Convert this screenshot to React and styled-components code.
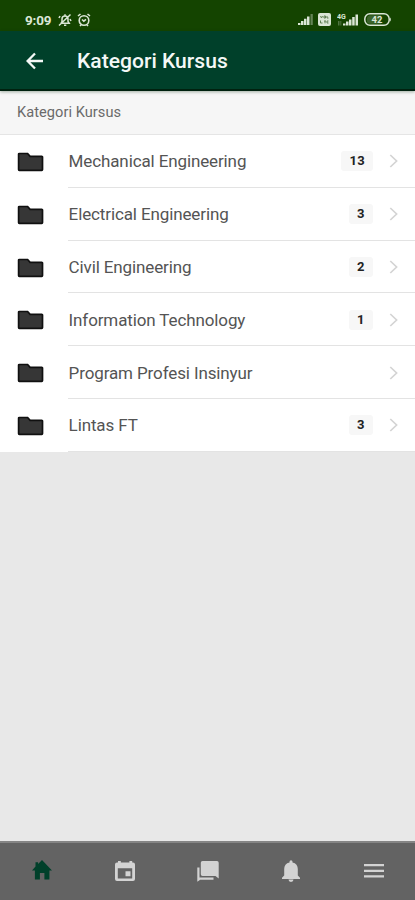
import React from 'react';
import styled, { createGlobalStyle } from 'styled-components';

const GlobalStyle = createGlobalStyle`
  * {
    box-sizing: border-box;
  }

  body {
    margin: 0;
    font-family: Roboto, 'Liberation Sans', sans-serif;
  }

  svg {
    display: block;
    flex-shrink: 0;
  }
`;

const Screen = styled.div`
  width: 100%;
  height: 900px;
  display: flex;
  flex-direction: column;
  overflow: hidden;
  background-color: #e8e8e8;
`;

const StatusBar = styled.div`
  height: 31px;
  flex-shrink: 0;
  display: flex;
  justify-content: space-between;
  padding: 8px 23px 0 25px;
  background-color: #144400;
  color: #dbe6d6;
`;

const StatusGroup = styled.div`
  display: flex;
  align-items: center;
  height: 23px;
  gap: ${props => props.$gap};
`;

const Clock = styled.span`
  width: 27px;
  font-size: 13.5px;
  font-weight: 700;
  letter-spacing: -0.2px;
  margin-right: 1px;
`;

const Header = styled.header`
  height: 60px;
  flex-shrink: 0;
  display: flex;
  align-items: center;
  gap: 33px;
  padding: 1px 0 0 26px;
  background-color: #00402a;
  border-bottom: 2px solid #00210f;
  box-shadow: 0 1px 3px rgba(0, 40, 10, 0.35);
  position: relative;
  color: #f4f8f6;
`;

const Title = styled.h1`
  margin: 0;
  font-size: 21.1px;
  font-weight: 500;
`;

const SectionLabel = styled.div`
  height: 44px;
  flex-shrink: 0;
  padding-left: 17px;
  line-height: 42px;
  font-size: 14.6px;
  letter-spacing: 0.05px;
  color: #6a6a6a;
  background-color: #f6f6f6;
  border-bottom: 1px solid #e5e5e5;
`;

const List = styled.ul`
  margin: 0;
  padding: 0;
  list-style: none;
  flex: 1;
`;

const Row = styled.li`
  height: 52.8px;
  display: flex;
  padding-left: 17px;
  background-color: #fff;
`;

const IconSlot = styled.div`
  width: 51px;
  padding-top: 17px;
`;

const RowBody = styled.div`
  flex: 1;
  display: flex;
  align-items: center;
  padding: 1px 16px 0 0.6px;
  border-bottom: 1.5px solid #e3e3e3;
`;

const Name = styled.span`
  flex: 1;
  font-size: 17px;
  letter-spacing: -0.12px;
  color: #545454;
`;

const Badge = styled.span`
  min-width: 24px;
  height: 20px;
  padding: 0 8px;
  border-radius: 3px;
  background-color: #f7f7f7;
  color: #222;
  font-size: 13px;
  font-weight: 700;
  line-height: 20px;
  text-align: center;
  letter-spacing: 0.3px;
  margin-right: 16px;
`;

const TabBar = styled.nav`
  height: 59px;
  flex-shrink: 0;
  display: grid;
  grid-template-columns: repeat(5, 1fr);
  justify-items: center;
  align-items: center;
  background-color: #636363;
  border-top: 2px solid #858585;
`;

const Tab = styled.div`
  color: ${props => (props.$active ? '#00402a' : '#d3d3d3')};
  padding-bottom: ${props => (props.$active ? '4px' : '1px')};
`;

const categories = [
  { name: 'Mechanical Engineering', count: 13 },
  { name: 'Electrical Engineering', count: 3 },
  { name: 'Civil Engineering', count: 2 },
  { name: 'Information Technology', count: 1 },
  { name: 'Program Profesi Insinyur' },
  { name: 'Lintas FT', count: 3 },
];

const MutedBell = () => (
  <svg width="14" height="14" viewBox="0 0 14 14" fill="none" stroke="currentColor" strokeWidth="1.5">
    <path d="M3 10.3h8.2L10 8.500V6a3 3 0 0 0-6 0v2.500L3 10.300M6 12.200h2.300M7 1.200v1.500M1 12.500 12.500 1.500" />
    <path d="M1 5l1-2M13 8l-1-2" />
  </svg>
);

const AlarmClock = () => (
  <svg width="14" height="14" viewBox="0 0 14 14" fill="none" stroke="currentColor" strokeWidth="1.6">
    <circle cx="7" cy="7.5" r="4.8" />
    <path d="M1 3l2.500-2M13 3l-2.500-2M5 6.500l1.800 1.600L9 6.400M3 13l1-1M11 13l-1-1" />
  </svg>
);

const Signal = () => (
  <svg width="15" height="11" viewBox="0 0 15 11" fill="currentColor">
    <path d="M0 9h2.500v2H0zM3 7h2.500v4H3zM6 4.800h2.500V11H6zM9 2.500h2.500V11H9z" />
    <path d="M12.500 0h2.300v11h-2.300z" opacity="0.4" />
  </svg>
);

const VolteBadge = () => (
  <svg width="13" height="13" viewBox="0 0 13 13">
    <rect width="13" height="13" rx="2" fill="currentColor" />
    <path d="M2.500 3l1 2 1-2M6 3h1.500v2H6zM9 3v2h1.500M2.500 7.500v2.500h2M6 8h2M7 8v2.300M10.500 8H9v2h1.500" stroke="#5f7f52" fill="none" />
  </svg>
);

const Signal4G = () => (
  <svg width="22" height="14" viewBox="0 0 22 14" fill="currentColor">
    <text x="0" y="5.7" fontSize="7" fontWeight="700">4G</text>
    <path d="M6 10.500h2.500v2H6zM9 8.500h2.500v4H9zM12 6.500h2.500v6H12zM15.200 4h2.500v8.500h-2.500zM18.500 1.500h2.500v11h-2.500z" />
    <path d="M1 8h1.500v4.500H1zM3.300 8h1v4.500h-1z" opacity="0.3" />
  </svg>
);

const Battery = () => (
  <svg width="28" height="13" viewBox="0 0 28 13">
    <rect x="0.8" y="0.8" width="24.4" height="11.4" rx="5.2" fill="none" stroke="currentColor" strokeWidth="1.5" />
    <path d="M6 2.300h11v8.400H6a3 3 0 0 1-3-4.200 4 4 0 0 1 3-4.200z" fill="currentColor" opacity="0.2" />
    <path d="M26.200 4.500c1.100.5 1.100 3.500 0 4z" fill="currentColor" />
    <text x="13" y="10" fontSize="9.5" fontWeight="700" textAnchor="middle" fill="currentColor">42</text>
  </svg>
);

const BackArrow = () => (
  <svg width="18" height="18" viewBox="0 0 18 18" fill="none" stroke="currentColor" strokeWidth="2.3">
    <path d="M17 9H2M9 1.500 1.600 9 9 16.500" />
  </svg>
);

const Folder = () => (
  <svg width="27" height="20" viewBox="0 0 27 20">
    <path
      d="M2.300 1.500h8.300l2.500 2.800h11.700a.7.7 0 0 1 .7.7v12.600a.7.7 0 0 1-.7.7H2.300a.7.7 0 0 1-.7-.7V2.200a.7.7 0 0 1 .7-.7z"
      fill="#363636"
      stroke="#101010"
      strokeWidth="1.7"
    />
  </svg>
);

const Chevron = () => (
  <svg width="10" height="14" viewBox="0 0 10 14" fill="none" stroke="#d4d4d4" strokeWidth="1.7">
    <path d="M1.300 1l6.300 6-6.300 6" />
  </svg>
);

const HomeIcon = () => (
  <svg width="20" height="20" viewBox="0 0 20 20" fill="currentColor">
    <path d="M10 0 20 10.500h-2.600v9h-5v-6.500H7.900v6.500h-5v-9H0l3.500-3.900V2.300h2.600v1.600z" />
  </svg>
);

const CalendarIcon = () => (
  <svg width="20" height="20" viewBox="0 0 20 20" fill="currentColor">
    <path
      fillRule="evenodd"
      d="M3 0h2.800v1.600h8.600V0h2.800v1.600h.8a2 2 0 0 1 2 2V18a2 2 0 0 1-2 2H2a2 2 0 0 1-2-2V3.600a2 2 0 0 1 2-2h1zM2.800 7.200v10.200h14.400V7.200zM10.500 10.200h5v5h-5z"
    />
  </svg>
);

const ChatsIcon = () => (
  <svg width="22" height="21" viewBox="0 0 22 21" fill="currentColor">
    <path d="M5.500 0H20a1.700 1.700 0 0 1 1.700 1.700V17.500L18.500 15h-13a1.700 1.700 0 0 1-1.700-1.700V1.700A1.700 1.700 0 0 1 5.500 0z" />
    <path d="M.3 6.500h2.200V16.500h14v2.300H3.200L.3 20.800z" />
  </svg>
);

const BellIcon = () => (
  <svg width="18" height="22" viewBox="0 0 18 22" fill="currentColor">
    <path d="M7.500 1.800a1.500 1.500 0 0 1 3 0v.7c3.500.7 5.300 3.200 5.300 6.500v6.500l2.200 2.200V19H0v-1.300l2.200-2.200V9c0-3.300 1.800-5.800 5.300-6.500zM6.500 19.500h5a2.500 2.500 0 0 1-5 0z" />
  </svg>
);

const MenuIcon = () => (
  <svg width="20" height="14" viewBox="0 0 20 14" fill="currentColor">
    <path d="M0 0h20v2.300H0zM0 5.700h20V8H0zM0 11.300h20v2.300H0z" />
  </svg>
);

const App = () => {
  return (
    <Screen>
      <GlobalStyle />
      <StatusBar>
        <StatusGroup $gap="5px">
          <Clock>9:09</Clock>
          <MutedBell />
          <AlarmClock />
        </StatusGroup>
        <StatusGroup $gap="5.5px">
          <Signal />
          <VolteBadge />
          <Signal4G />
          <Battery />
        </StatusGroup>
      </StatusBar>

      <Header>
        <BackArrow />
        <Title>Kategori Kursus</Title>
      </Header>

      <SectionLabel>Kategori Kursus</SectionLabel>

      <List>
        {categories.map(({ name, count }) => (
          <Row key={name}>
            <IconSlot>
              <Folder />
            </IconSlot>
            <RowBody>
              <Name>{name}</Name>
              {count && <Badge>{count}</Badge>}
              <Chevron />
            </RowBody>
          </Row>
        ))}
      </List>

      <TabBar>
        <Tab $active><HomeIcon /></Tab>
        <Tab><CalendarIcon /></Tab>
        <Tab><ChatsIcon /></Tab>
        <Tab><BellIcon /></Tab>
        <Tab><MenuIcon /></Tab>
      </TabBar>
    </Screen>
  );
};

export default App;
